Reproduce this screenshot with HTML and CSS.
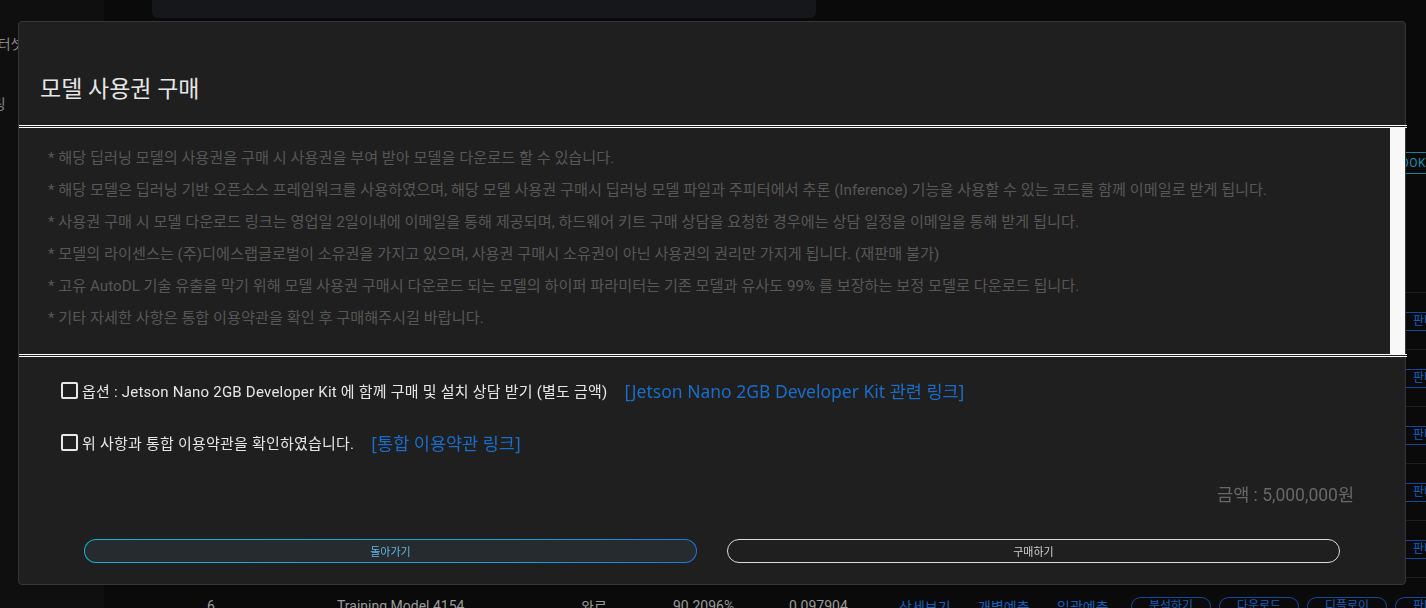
FILE: index.html
```html
<!DOCTYPE html>
<html lang="ko">
<head>
<meta charset="utf-8">
<title>모델 사용권 구매</title>
<link rel="stylesheet" href="styles.css">
</head>
<body>
<div class="app">
  <aside class="sidebar">
    <nav class="nav">
      <a class="nav-item nav-dataset">데이터셋</a>
      <a class="nav-item nav-model">모델링</a>
    </nav>
  </aside>
  <main class="main">
    <div class="top-card"></div>
    <div class="toolbar"><button class="btn-notebook">NOTEBOOK</button></div>
    <div class="table">
      <div class="thead">
        <span>No</span><span>모델명</span><span>상태</span><span>정확도</span><span>Loss</span><span>상세</span><span>예측</span><span></span><span>기능</span>
      </div>
      <div class="trow">
        <span>1</span><span>Training Model 4149</span><span>완료</span><span>88.1203%</span><span>0.112345</span>
        <a class="cell-link">상세보기</a><a class="cell-link">개별예측</a><a class="cell-link">일괄예측</a>
        <div class="actions"><span class="pill">분석하기</span><span class="pill">다운로드</span><span class="pill">디플로이</span><span class="pill">판매하기</span></div>
      </div>
      <div class="trow">
        <span>2</span><span>Training Model 4150</span><span>완료</span><span>89.0412%</span><span>0.106821</span>
        <a class="cell-link">상세보기</a><a class="cell-link">개별예측</a><a class="cell-link">일괄예측</a>
        <div class="actions"><span class="pill">분석하기</span><span class="pill">다운로드</span><span class="pill">디플로이</span><span class="pill">판매하기</span></div>
      </div>
      <div class="trow">
        <span>3</span><span>Training Model 4151</span><span>완료</span><span>87.5530%</span><span>0.118902</span>
        <a class="cell-link">상세보기</a><a class="cell-link">개별예측</a><a class="cell-link">일괄예측</a>
        <div class="actions"><span class="pill">분석하기</span><span class="pill">다운로드</span><span class="pill">디플로이</span><span class="pill">판매하기</span></div>
      </div>
      <div class="trow">
        <span>4</span><span>Training Model 4152</span><span>완료</span><span>89.8876%</span><span>0.101377</span>
        <a class="cell-link">상세보기</a><a class="cell-link">개별예측</a><a class="cell-link">일괄예측</a>
        <div class="actions"><span class="pill">분석하기</span><span class="pill">다운로드</span><span class="pill">디플로이</span><span class="pill">판매하기</span></div>
      </div>
      <div class="trow">
        <span>5</span><span>Training Model 4153</span><span>완료</span><span>90.0105%</span><span>0.099210</span>
        <a class="cell-link">상세보기</a><a class="cell-link">개별예측</a><a class="cell-link">일괄예측</a>
        <div class="actions"><span class="pill">분석하기</span><span class="pill">다운로드</span><span class="pill">디플로이</span><span class="pill">판매하기</span></div>
      </div>
      <div class="trow">
        <span>6</span><span>Training Model 4154</span><span>완료</span><span>90.2096%</span><span>0.097904</span>
        <a class="cell-link">상세보기</a><a class="cell-link">개별예측</a><a class="cell-link">일괄예측</a>
        <div class="actions"><span class="pill">분석하기</span><span class="pill">다운로드</span><span class="pill">디플로이</span><span class="pill">판매하기</span></div>
      </div>
    </div>
  </main>
</div>

<div class="overlay">
  <div class="modal">
    <div class="modal-header">
      <h2 class="modal-title">모델 사용권 구매</h2>
    </div>
    <div class="notice">
      <div class="notice-text">
        <p>* 해당 딥러닝 모델의 사용권을 구매 시 사용권을 부여 받아 모델을 다운로드 할 수 있습니다.</p>
        <p>* 해당 모델은 딥러닝 기반 오픈소스 프레임워크를 사용하였으며, 해당 모델 사용권 구매시 딥러닝 모델 파일과 주피터에서 추론 (Inference) 기능을 사용할 수 있는 코드를 함께 이메일로 받게 됩니다.</p>
        <p>* 사용권 구매 시 모델 다운로드 링크는 영업일 2일이내에 이메일을 통해 제공되며, 하드웨어 키트 구매 상담을 요청한 경우에는 상담 일정을 이메일을 통해 받게 됩니다.</p>
        <p>* 모델의 라이센스는 (주)디에스랩글로벌이 소유권을 가지고 있으며, 사용권 구매시 소유권이 아닌 사용권의 권리만 가지게 됩니다. (재판매 불가)</p>
        <p>* 고유 AutoDL 기술 유출을 막기 위해 모델 사용권 구매시 다운로드 되는 모델의 하이퍼 파라미터는 기존 모델과 유사도 99% 를 보장하는 보정 모델로 다운로드 됩니다.</p>
        <p>* 기타 자세한 사항은 통합 이용약관을 확인 후 구매해주시길 바랍니다.</p>
      </div>
      <div class="scroll-track"></div>
    </div>
    <div class="options">
      <div class="option">
        <label class="check"><input type="checkbox" class="check-input"><span>옵션 : Jetson Nano 2GB Developer Kit 에 함께 구매 및 설치 상담 받기 (별도 금액)</span></label>
        <a class="option-link">[Jetson Nano 2GB Developer Kit 관련 링크]</a>
      </div>
      <div class="option">
        <label class="check"><input type="checkbox" class="check-input"><span>위 사항과 통합 이용약관을 확인하였습니다.</span></label>
        <a class="option-link">[통합 이용약관 링크]</a>
      </div>
      <div class="price">금액 : 5,000,000원</div>
    </div>
    <div class="modal-footer">
      <button class="btn btn-back">돌아가기</button>
      <button class="btn btn-buy">구매하기</button>
    </div>
  </div>
</div>
</body>
</html>
```

FILE: styles.css
```css
* { box-sizing: border-box; }
html, body { margin: 0; height: 100%; }
body {
  background: #0a0a0a;
  font-family: Roboto, "Noto Sans CJK KR", sans-serif;
  color: #9e9e9e;
  overflow: hidden;
}

/* background page */
.app { display: flex; height: 100vh; }
.sidebar { width: 104px; flex: none; background: #0f0f0f; overflow: hidden; }
.nav { display: flex; flex-direction: column; padding-top: 34px; gap: 40px; }
.nav-item { font-size: 14px; line-height: 20px; color: #8a8a8a; white-space: nowrap; }
.nav-dataset { margin-left: -28px; }
.nav-model { margin-left: -33px; }

.main { flex: 1; min-width: 0; display: flex; flex-direction: column; overflow: hidden; }
.top-card {
  flex: none;
  margin-left: 48px;
  width: 664px;
  height: 18px;
  background: #16171a;
  border-radius: 0 0 6px 6px;
}
.toolbar { flex: none; margin-top: 134px; height: 22px; display: flex; justify-content: flex-end; }
.btn-notebook {
  margin-right: -13px;
  height: 22px;
  padding: 0 12px;
  border: 1px solid #17839b;
  border-radius: 4px;
  background: transparent;
  color: #1a8fa8;
  font: 12px Roboto, sans-serif;
  letter-spacing: 0.5px;
}
.table { flex: none; margin-top: 58px; }
.thead, .trow {
  display: grid;
  grid-template-columns: 130px 244px 92px 116px 110px 79px 79px 74px auto;
  align-items: center;
  padding-left: 103px;
  border-bottom: 1px solid #1e1e1e;
  white-space: nowrap;
  font-size: 14px;
}
.thead { height: 61px; color: #bdbdbd; }
.trow { height: 57px; color: #9a9a9a; }
.cell-link { color: #1560bd; }
.actions { display: flex; gap: 8px; }
.pill {
  width: 80px;
  height: 19px;
  border: 1px solid #0d4a9e;
  border-radius: 10px;
  color: #1560bd;
  font-size: 12px;
  line-height: 17px;
  text-align: center;
}

/* modal */
.overlay {
  position: fixed;
  inset: 0;
  padding: 21px 20px 23px 18px;
  display: flex;
}
.modal {
  flex: 1;
  display: flex;
  flex-direction: column;
  background: #1f1f1f;
  border: 1px solid #363636;
  border-radius: 4px;
}
.modal-header { flex: none; height: 103px; padding: 52px 0 0 21px; }
.modal-title { margin: 0; font-size: 23px; line-height: 32px; font-weight: 400; color: #e6e6e6; }

.notice {
  flex: none;
  display: flex;
  height: 232px;
  margin-right: -2px;
  border-top: 3px double #ffffff;
  border-bottom: 3px double #ffffff;
}
.notice-text { flex: 1; padding: 14px 0 0 29px; font-size: 15.2px; line-height: 32px; color: #575757; white-space: nowrap; overflow: hidden; }
.notice-text p { margin: 0; }
.scroll-track { flex: none; width: 15px; margin-right: 2px; background: #f8f8f8; }

.options { flex: none; display: flex; flex-direction: column; padding: 21px 51px 0 42px; }
.option { display: flex; align-items: center; height: 24px; }
.option + .option { margin-top: 28px; }
.check { display: flex; align-items: center; gap: 4px; font-size: 15px; letter-spacing: 0.22px; color: #e6e6e6; }
.check-input {
  appearance: none;
  -webkit-appearance: none;
  margin: 0;
  width: 17px;
  height: 17px;
  border: 2px solid #e8e8e8;
  border-radius: 2px;
  background: transparent;
}
.option-link {
  margin-left: 17px;
  font-family: "Noto Sans", "Noto Sans CJK KR", sans-serif;
  font-size: 17.5px;
  color: #1a6dc9;
  text-decoration: none;
}
.price { margin-top: 29px; height: 24px; line-height: 24px; text-align: right; font-size: 17.5px; color: #686868; }

.modal-footer { flex: none; display: flex; gap: 30px; padding: 32px 65px 21px; }
.btn {
  flex: 1;
  height: 24px;
  border-radius: 12px;
  font: 11px Roboto, "Noto Sans CJK KR", sans-serif;
  padding: 0;
}
.btn-back {
  border: 1px solid transparent;
  background: linear-gradient(#262b30, #262b30) padding-box,
              linear-gradient(90deg, #16b2d4, #1a9fd6 70%, #1e78e0) border-box;
  color: #5db7e6;
}
.btn-buy { background: transparent; border: 1px solid #dcdcdc; color: #cfcfcf; }
```
